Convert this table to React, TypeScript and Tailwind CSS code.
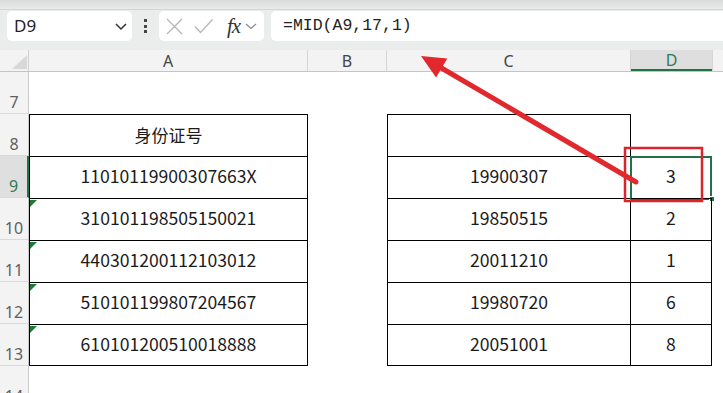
import React from "react";

const cellFont = { fontFamily: '"Noto Sans CJK SC", "Noto Sans", sans-serif' };

const data = [
  { n: 9, a: "11010119900307663X", c: "19900307", d: "3" },
  { n: 10, a: "310101198505150021", c: "19850515", d: "2" },
  { n: 11, a: "440301200112103012", c: "20011210", d: "1" },
  { n: 12, a: "510101199807204567", c: "19980720", d: "6" },
  { n: 13, a: "610101200510018888", c: "20051001", d: "8" },
];

function RowHeader({ n, active }: { n: number; active?: boolean }) {
  return (
    <div
      className={
        "w-[29px] shrink-0 h-full flex items-end justify-center leading-[22px] text-[16px] border-b border-[#dadada] " +
        (active
          ? "bg-[#dfdfdf] text-[#2f7a52] border-r-2 border-r-[#217346]"
          : "bg-[#f3f3f3] text-[#5f5f5f] border-r border-r-[#c9c9c9]")
      }
      style={{ fontFamily: '"Noto Sans", sans-serif' }}
    >
      {n}
    </div>
  );
}

function GreenTri() {
  return (
    <div className="absolute left-0 top-[1px] w-[7px] h-[7px] bg-[#1e7b34] [clip-path:polygon(0_0,100%_0,0_100%)]" />
  );
}

export default function App() {
  return (
    <div
      className="relative w-[723px] h-[393px] overflow-hidden bg-white text-[#1b1b1b]"
      style={cellFont}
    >
      {/* top strip */}
      <div className="h-[10px] bg-gradient-to-b from-[#d9dbda] to-[#e9ebea] border-b border-[#d3d5d4]" />
      {/* formula bar */}
      <div className="h-[40px] bg-[#ebedec] flex items-start pt-[1px] pl-[7px]">
        <div className="w-[125px] h-[30px] bg-white rounded-[5px] flex items-center justify-between pl-[7px] pr-[3px]">
          <span className="text-[17px] text-[#222]" style={{ fontFamily: '"Noto Sans", sans-serif' }}>
            D9
          </span>
          <svg width="14" height="10" viewBox="0 0 14 10" className="mr-[1px]">
            <path d="M2 3 L7 8 L12 3" fill="none" stroke="#333" strokeWidth="1.5" />
          </svg>
        </div>
        <div className="w-[27px] h-[30px] flex flex-col items-center justify-center gap-[2.5px]">
          <div className="w-[3px] h-[3px] bg-[#444]" />
          <div className="w-[3px] h-[3px] bg-[#444]" />
          <div className="w-[3px] h-[3px] bg-[#444]" />
        </div>
        <div className="w-[105px] h-[30px] bg-white rounded-[5px] flex items-center pl-[7px]">
          <svg width="17" height="17" viewBox="0 0 17 17">
            <path d="M1 1 L16 16 M16 1 L1 16" stroke="#b8b8b8" strokeWidth="1.4" fill="none" />
          </svg>
          <svg width="20" height="17" viewBox="0 0 20 17" className="ml-[11px]">
            <path d="M1 8.5 L6.5 14.5 L18.5 1.5" stroke="#b8b8b8" strokeWidth="1.4" fill="none" />
          </svg>
          <span
            className="ml-[13px] text-[21px] italic leading-none text-[#333] tracking-[-1px]"
            style={{ fontFamily: '"Liberation Serif", serif' }}
          >
            fx
          </span>
          <svg width="12" height="8" viewBox="0 0 12 8" className="ml-[5px]">
            <path d="M1 2 L6 6.5 L11 2" fill="none" stroke="#8a8a8a" strokeWidth="1.2" />
          </svg>
        </div>
        <div className="ml-[7px] flex-1 h-[30px] bg-white rounded-l-[5px] flex items-center pl-[12px]">
          <span className="text-[16.5px] text-[#222]" style={{ fontFamily: '"Liberation Mono", monospace' }}>
            =MID(A9,17,1)
          </span>
        </div>
      </div>
      {/* column headers */}
      <div
        className="h-[22px] flex bg-[#f3f3f3] border-b border-[#c4c4c4] text-[16px] text-[#444]"
        style={{ fontFamily: '"Noto Sans", sans-serif' }}
      >
        <div className="w-[29px] shrink-0 relative border-r border-[#d0d0d0]">
          <div className="absolute left-[12px] top-[5px] w-[15px] h-[14px] bg-[#d8d8d8] [clip-path:polygon(100%_0,100%_100%,0_100%)]" />
        </div>
        <div className="w-[279px] shrink-0 flex items-center justify-center border-r border-[#d6d6d6] leading-none">A</div>
        <div className="w-[79px] shrink-0 flex items-center justify-center border-r border-[#d6d6d6] leading-none">B</div>
        <div className="w-[244px] shrink-0 flex items-center justify-center border-r border-[#d6d6d6] leading-none">C</div>
        <div className="w-[81px] shrink-0 flex items-center justify-center bg-[#dedede] text-[#2f7a55] border-b-2 border-[#217346] leading-none">
          D
        </div>
        <div className="flex-1 border-l border-[#d6d6d6]" />
      </div>
      {/* row 7 */}
      <div className="h-[42px] flex">
        <RowHeader n={7} />
        <div className="flex-1" />
      </div>
      {/* row 8 */}
      <div className="h-[42px] flex">
        <RowHeader n={8} />
        <div className="w-[279px] shrink-0 border-l border-r border-t border-black flex items-center justify-center text-[17px] pb-[1px]">
          身份证号
        </div>
        <div className="w-[79px] shrink-0" />
        <div className="w-[244px] shrink-0 border-l border-r border-t border-black" />
        <div className="flex-1" />
      </div>
      {data.map((r, i) => {
        const last = i === data.length - 1;
        return (
          <div key={r.n} className="h-[42px] flex">
            <RowHeader n={r.n} active={r.n === 9} />
            <div
              className={
                "relative w-[279px] shrink-0 border-l border-r border-t border-black flex items-center justify-center text-[17.6px] pb-[2px] " +
                (last ? "border-b" : "")
              }
            >
              {r.n !== 9 && <GreenTri />}
              {r.a}
            </div>
            <div className="w-[79px] shrink-0" />
            <div
              className={
                "w-[244px] shrink-0 border-l border-r border-t border-black flex items-center justify-center text-[17.6px] pb-[2px] " +
                (last ? "border-b" : "")
              }
            >
              {r.c}
            </div>
            <div
              className={
                "relative w-[81px] shrink-0 border-r border-t border-black flex items-center justify-center text-[17.6px] pb-[2px] " +
                (last ? "border-b" : "")
              }
            >
              {r.n === 9 && (
                <>
                  <div className="absolute left-[-1px] top-[-1px] w-[82px] h-[44px] border-2 border-[#217346]" />
                  <div className="absolute right-[-4px] bottom-[-4px] w-[6px] h-[6px] bg-[#217346] border border-white" />
                </>
              )}
              {r.d}
            </div>
            <div className="flex-1" />
          </div>
        );
      })}
      <div className="h-[42px] flex">
        <RowHeader n={14} />
        <div className="flex-1" />
      </div>
      {/* annotation overlay */}
      <svg className="absolute left-0 top-0 pointer-events-none" width="723" height="393" viewBox="0 0 723 393">
        <rect x="625" y="148" width="77" height="53" fill="none" stroke="#d9262c" strokeWidth="2.5" />
        <line x1="636" y1="182" x2="438" y2="66" stroke="#e0282d" strokeWidth="5" strokeLinecap="round" />
        <polygon points="421,56 447.3,58.6 436.1,77.6" fill="#e0282d" />
      </svg>
    </div>
  );
}
